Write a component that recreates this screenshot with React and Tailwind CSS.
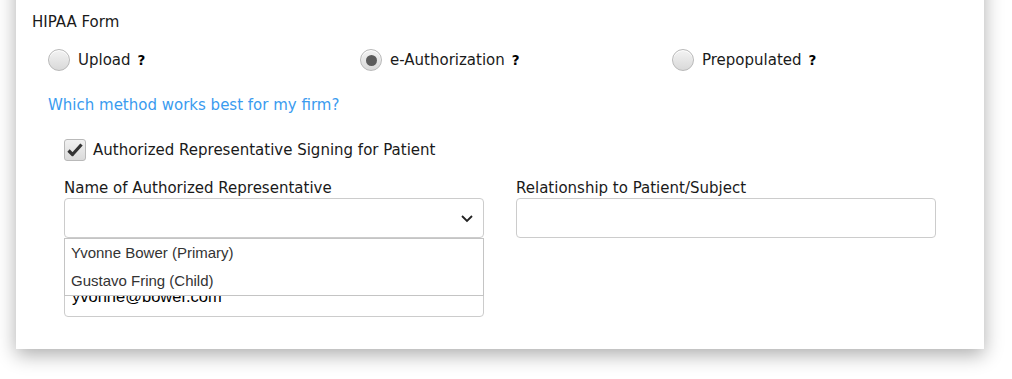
import React from "react";

const labelFont = { fontFamily: '"DejaVu Sans", Verdana, sans-serif' };

function Radio({ checked, label }) {
  return (
    <label className="flex items-center h-[22px]">
      <span className="w-[22px] h-[22px] rounded-full border border-[#b9b9b9] bg-gradient-to-b from-[#f3f3f3] to-[#d9d9d9] flex items-center justify-center shadow-[inset_0_1px_0_#fff]">
        {checked && <span className="w-[11px] h-[11px] rounded-full bg-[#5c5c5c]"></span>}
      </span>
      <span className="ml-2 text-[15px] text-[#1a1a1a]">{label}</span>
      <span className="ml-[7px] text-[13.5px] font-bold text-black">?</span>
    </label>
  );
}

function App() {
  return (
    <div className="h-[379px] overflow-hidden bg-white pl-4 pr-[28px]" style={labelFont}>
      <div className="mt-[-40px] bg-white pt-[52px] pb-8 shadow-[0_6px_18px_rgba(0,0,0,0.32)]">
        <div className="pl-4 h-5 leading-5 text-[15px] text-[#1a1a1a]">HIPAA Form</div>

        {/* method choice */}
        <div className="mt-[17px] pl-8 grid grid-cols-3">
          <Radio label="Upload" />
          <Radio label="e-Authorization" checked />
          <Radio label="Prepopulated" />
        </div>

        <div className="mt-6 pl-8 h-5 leading-5 text-[15px] text-[#3a9bef]">
          Which method works best for my firm?
        </div>

        <div className="mt-6 pl-12 flex items-center h-[22px]">
          <span className="w-[22px] h-[22px] rounded-[3px] border border-[#b9b9b9] bg-gradient-to-b from-[#f1f1f1] to-[#dadada] flex items-center justify-center">
            <svg width="16" height="14" viewBox="0 0 16 14">
              <path d="M1.5 7.5 L5.5 11.5 L14.5 1.5" fill="none" stroke="#333" strokeWidth="3.2" strokeLinejoin="round" />
            </svg>
          </span>
          <span className="ml-[7px] text-[15px] text-[#1a1a1a]">Authorized Representative Signing for Patient</span>
        </div>

        <div className="mt-[17px] px-12 grid grid-cols-2 gap-x-8">
          <div>
            <div className="h-5 leading-5 text-[15px] text-[#1a1a1a]">Name of Authorized Representative</div>
            <div className="relative">
              <div className="h-10 rounded-[4px] border border-[#cccccc] bg-white flex items-center justify-end pr-[9px]">
                <svg width="14" height="10" viewBox="0 0 14 10">
                  <path d="M2 3 L7 8 L12 3" fill="none" stroke="#222" strokeWidth="1.8" />
                </svg>
              </div>
              <div className="absolute left-0 top-full w-full border border-[#c4c4c4] bg-white z-10" style={{ fontFamily: '"Liberation Sans", Arial, sans-serif' }}>
                <div className="h-7 leading-7 pl-[6px] text-[15px] text-[#333]">Yvonne Bower (Primary)</div>
                <div className="h-7 leading-7 pl-[6px] text-[15px] text-[#333]">Gustavo Fring (Child)</div>
              </div>
            </div>
            {/* email label sits under the open list */}
            <div className="mt-3 h-5"></div>
            <div className="mt-[7px] h-10 rounded-[4px] border border-[#cccccc] bg-white flex items-center pl-[7px] pb-[2px] text-[16.5px] text-black" style={{ fontFamily: '"Liberation Sans", Arial, sans-serif' }}>
              yvonne@bower.com
            </div>
          </div>
          <div>
            <div className="h-5 leading-5 text-[15px] text-[#1a1a1a]">Relationship to Patient/Subject</div>
            <div className="h-10 rounded-[4px] border border-[#cccccc] bg-white"></div>
          </div>
        </div>
      </div>
    </div>
  );
}

export default App;
